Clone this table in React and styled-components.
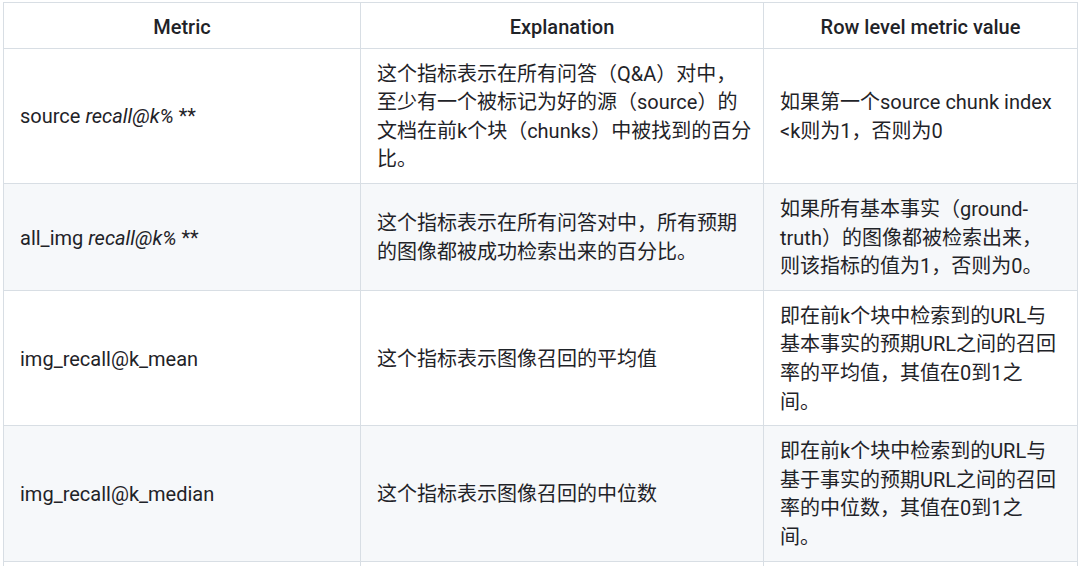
import React from "react";
import styled, { createGlobalStyle } from "styled-components";

const GlobalStyle = createGlobalStyle`
  html, body {
    margin: 0;
    padding: 0;
    background: #ffffff;
    overflow: hidden;
  }
  body {
    font-family: Roboto, "Noto Sans CJK SC", sans-serif;
    color: #1f2328;
  }
`;

const rows = [
  {
    metric: (
      <>
        source <em>recall@k%</em> **
      </>
    ),
    explain: [
      "这个指标表示在所有问答（Q&A）对中，",
      "至少有一个被标记为好的源（source）的",
      "文档在前k个块（chunks）中被找到的百分",
      "比。",
    ],
    value: ["如果第一个source chunk index", "<k则为1，否则为0"],
  },
  {
    metric: (
      <>
        all_img <em>recall@k%</em> **
      </>
    ),
    explain: ["这个指标表示在所有问答对中，所有预期", "的图像都被成功检索出来的百分比。"],
    value: [
      "如果所有基本事实（ground-",
      "truth）的图像都被检索出来，",
      "则该指标的值为1，否则为0。",
    ],
  },
  {
    metric: "img_recall@k_mean",
    explain: ["这个指标表示图像召回的平均值"],
    value: [
      "即在前k个块中检索到的URL与",
      "基本事实的预期URL之间的召回",
      "率的平均值，其值在0到1之",
      "间。",
    ],
  },
  {
    metric: "img_recall@k_median",
    explain: ["这个指标表示图像召回的中位数"],
    value: [
      "即在前k个块中检索到的URL与",
      "基于事实的预期URL之间的召回",
      "率的中位数，其值在0到1之",
      "间。",
    ],
  },
];

const Page = styled.div`
  padding: 2px 0 0 3px;
`;

const Table = styled.table`
  border-collapse: collapse;
  table-layout: fixed;
  width: 1074px;
  font-size: 20px;
  line-height: 28.6px;
`;

const Row = styled.tr`
  background: ${(props) => (props.$striped ? "#f6f8fa" : "#ffffff")};
  border-top: 1px solid #d4dae0;
`;

const HeadCell = styled.th`
  border: 1px solid #d8dee4;
  padding: 10px 16px 6px;
  font-weight: 500;
  text-align: center;
  white-space: nowrap;
`;

const Cell = styled.td`
  border: 1px solid #d8dee4;
  padding: 11px 16px 9px 16px;
  vertical-align: middle;
  white-space: nowrap;

  em {
    font-style: italic;
  }
`;

const Lines = ({ items }) =>
  items.map((line, i) => (
    <React.Fragment key={i}>
      {line}
      {i < items.length - 1 && <br />}
    </React.Fragment>
  ));

const App = () => {
  return (
    <Page>
      <GlobalStyle />
      <Table>
        <colgroup>
          <col style={{ width: 357 }} />
          <col style={{ width: 403 }} />
          <col style={{ width: 314 }} />
        </colgroup>
        <thead>
          <Row>
            <HeadCell>Metric</HeadCell>
            <HeadCell>Explanation</HeadCell>
            <HeadCell>Row level metric value</HeadCell>
          </Row>
        </thead>
        <tbody>
          {rows.map((r, i) => (
            <Row key={i} $striped={i % 2 === 1}>
              <Cell>{r.metric}</Cell>
              <Cell>
                <Lines items={r.explain} />
              </Cell>
              <Cell>
                <Lines items={r.value} />
              </Cell>
            </Row>
          ))}
          <Row>
            <Cell>&nbsp;</Cell>
            <Cell>&nbsp;</Cell>
            <Cell>&nbsp;</Cell>
          </Row>
        </tbody>
      </Table>
    </Page>
  );
};

export default App;
